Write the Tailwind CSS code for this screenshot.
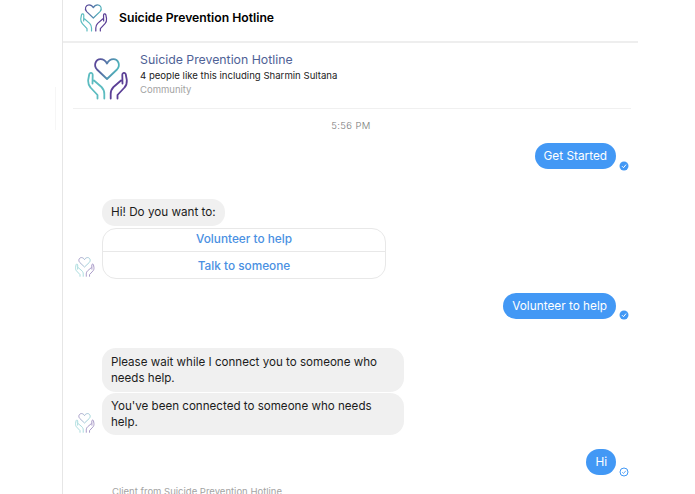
<!DOCTYPE html>
<html lang="en">
<head>
    <meta charset="UTF-8">
    <meta name="viewport" content="width=device-width, initial-scale=1.0">
    <title>Suicide Prevention Hotline</title>
    <script src="https://cdn.jsdelivr.net/npm/@tailwindcss/browser@4"></script>
</head>
<body class="bg-white h-[494px] overflow-hidden font-['Inter','Liberation_Sans',sans-serif] text-[#1c1c1c]">
    <svg class="absolute w-0 h-0">
        <defs>
            <linearGradient id="heartStroke" x1="0" y1="0" x2="1" y2="0.3">
                <stop offset="0" stop-color="#5b3f96"/>
                <stop offset="1" stop-color="#4fb3bb"/>
            </linearGradient>
        </defs>
        <symbol id="logo" viewBox="0 0 42 42">
            <path fill="none" stroke="url(#heartStroke)" stroke-width="1.800" stroke-linejoin="round" d="M20 21 L10 11.500 C6 7 9 1.200 13.500 1.200 C16.300 1.200 18.700 3 20 5.500 C21.300 3 23.700 1.200 26.500 1.200 C31 1.200 34 7 30 11.500 Z"/>
            <path fill="none" stroke="#5cbcc0" stroke-width="1.800" stroke-linecap="round" stroke-linejoin="round" d="M10.500 40.500 L10.500 37 L3.500 29.500 C1.500 27.500 1 25 1.200 22 L2.300 16 C3 14.300 5.700 14.500 5.700 16.800 L5.500 25.500 M7 22.500 L14.500 29 C16.500 31 17.300 33 17.300 36 L17.300 40.500"/>
            <path fill="none" stroke="#5b3f96" stroke-width="1.800" stroke-linecap="round" stroke-linejoin="round" d="M30.500 40.500 L30.500 37 L37.500 29.500 C39.500 27.500 40 25 39.800 22 L38.700 16 C38 14.300 35.300 14.500 35.300 16.800 L35.500 25.500 M34 22.500 L26.500 29 C24.500 31 23.700 33 23.700 36 L23.700 40.500"/>
        </symbol>
    </svg>

    <!-- faint edge left of the panel -->
    <div class="absolute left-[55px] top-[87px] w-px h-[43px] bg-[#f6f6f6]"></div>

    <div class="ml-[62px] w-[576px] h-[494px] border-l border-[#e6e6e6] overflow-hidden">
        <!-- header -->
        <div class="h-[43px] border-b-2 border-[#eeeeee] flex items-center pl-[17px] gap-[11px] pb-[5px]">
            <svg class="w-[28px] h-[28px]"><use href="#logo"/></svg>
            <h1 class="text-[12.200px] font-semibold text-black">Suicide Prevention Hotline</h1>
        </div>

        <!-- page info -->
        <div class="mx-[10px] w-[558px] h-[66px] border-b border-[#f0f0f0] flex items-center pl-[14px] gap-[11px]">
            <svg class="w-[42px] h-[42px] mt-[6px]"><use href="#logo"/></svg>
            <div class="flex flex-col mt-[-2px]">
                <span class="text-[12.300px] leading-[16px] text-[#4f6296]">Suicide Prevention Hotline</span>
                <span class="text-[9.600px] leading-[15px] text-[#222]">4 people like this including Sharmin Sultana</span>
                <span class="text-[9.500px] leading-[14px] text-[#a3a3a3]">Community</span>
            </div>
        </div>

        <p class="mt-[10px] pl-[1px] text-center text-[9.500px] leading-[14px] tracking-[0.4px] font-light text-[#777]">5:56 PM</p>

        <!-- thread -->
        <div class="mt-[10px] flex flex-col">
            <div class="flex justify-end items-end pr-[9px] gap-[3px]">
                <div class="h-[26px] px-[9px] pt-[2px] rounded-[13px] bg-[#4298f5] text-white text-[11.800px] flex items-center">Get Started</div>
                <svg class="w-[10px] h-[10px] mb-[-2px]" viewBox="0 0 10 10"><circle cx="5" cy="5" r="4.500" fill="#4298f5"/><path d="M3 5.200 L4.500 6.700 L7 3.600" fill="none" stroke="#fff" stroke-width="1"/></svg>
            </div>

            <div class="mt-[30px] flex items-end pl-[12px] gap-[7px]">
                <svg class="w-[20px] h-[20px] opacity-60 mb-[2px]"><use href="#logo"/></svg>
                <div class="flex flex-col gap-[2px] items-start">
                    <div class="h-[27px] px-[9px] rounded-[13px] bg-[#f0f0f0] text-[11.700px] flex items-center">Hi! Do you want to:</div>
                    <div class="w-[284px] border border-[#e8e8e8] rounded-[14px] text-[11.800px] font-medium text-[#4a90e2] text-center divide-y divide-[#e8e8e8]">
                        <div class="h-[23px] leading-[21px]">Volunteer to help</div>
                        <div class="h-[26px] leading-[28px]">Talk to someone</div>
                    </div>
                </div>
            </div>

            <div class="mt-[14px] flex justify-end items-end pr-[9px] gap-[3px]">
                <div class="h-[26px] px-[9px] pt-[2px] rounded-[13px] bg-[#4298f5] text-white text-[11.800px] flex items-center">Volunteer to help</div>
                <svg class="w-[10px] h-[10px] mb-[-1px]" viewBox="0 0 10 10"><circle cx="5" cy="5" r="4.500" fill="#4298f5"/><path d="M3 5.200 L4.500 6.700 L7 3.600" fill="none" stroke="#fff" stroke-width="1"/></svg>
            </div>

            <div class="mt-[29px] flex items-end pl-[12px] gap-[7px]">
                <svg class="w-[20px] h-[20px] opacity-60 mb-[2px]"><use href="#logo"/></svg>
                <div class="flex flex-col gap-[1px] items-start w-[302px]">
                    <div class="w-full px-[9px] py-[6px] rounded-[14px] bg-[#f0f0f0] text-[11.600px] leading-[16px]">Please wait while I connect you to someone who needs help.</div>
                    <div class="w-full px-[9px] py-[5px] rounded-[14px] bg-[#f0f0f0] text-[11.600px] leading-[16px]">You've been connected to someone who needs help.</div>
                </div>
            </div>

            <div class="mt-[14px] flex justify-end items-end pr-[9px] gap-[3px]">
                <div class="h-[26px] px-[9px] pt-[2px] rounded-[13px] bg-[#4298f5] text-white text-[11.800px] flex items-center">Hi</div>
                <svg class="w-[10px] h-[10px] mb-[-2px]" viewBox="0 0 10 10"><circle cx="5" cy="5" r="4" fill="none" stroke="#4298f5" stroke-width="1"/><path d="M3.200 5.200 L4.500 6.500 L6.800 3.800" fill="none" stroke="#4298f5" stroke-width="0.800"/></svg>
            </div>

            <p class="mt-[11px] pl-[49px] text-[9.500px] leading-[12px] text-[#a3a3a3]">Client from Suicide Prevention Hotline</p>
        </div>
    </div>
</body>
</html>
